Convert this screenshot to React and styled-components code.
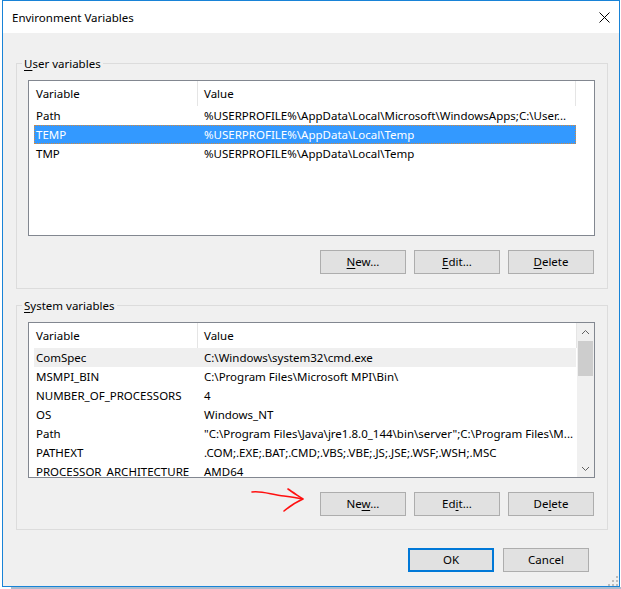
import React from "react";
import styled, { createGlobalStyle } from "styled-components";

const FONT = `"Noto Sans", "Open Sans", sans-serif`;

const GlobalStyle = createGlobalStyle`
  html, body { margin: 0; padding: 0; background: #ffffff; }
  body {
    font-family: ${FONT};
    font-size: 11.5px;
    color: #000;
  }
  * { box-sizing: border-box; }
`;

const Screen = styled.div`
  width: 621px;
  height: 589px;
  padding-left: 2px;
  overflow: hidden;
`;

const Window = styled.div`
  width: 618px;
  height: 587px;
  border: 1px solid #1883d7;
  background: #f0f0f0;
  display: flex;
  flex-direction: column;
`;

const Shadow = styled.div`
  margin-left: 9px;
  height: 2px;
  background: #aabdd0;
`;

const TitleBar = styled.div`
  height: 32px;
  flex: none;
  background: #ffffff;
  display: flex;
  align-items: center;
  padding: 0 9px;
`;

const Title = styled.span`
  flex: 1;
  font-size: 11.5px;
  color: #000;
`;

const Body = styled.div`
  flex: 1;
  display: flex;
  flex-direction: column;
  padding: 22px 11px 0 13px;
`;

const Group = styled.fieldset`
  margin: ${(p) => (p.$first ? "0" : "8px 0 0 0")};
  padding: 9px 12px ${(p) => (p.$first ? 14 : 13)}px 5px;
  border: 1px solid #dcdcdc;
  min-width: 0;
`;

const Legend = styled.legend`
  padding: 0 2px;
  line-height: 16px;
  font-size: 11.5px;
  position: relative;
  top: 1px;
`;

const Key = styled.span`
  text-decoration: underline;
  text-underline-offset: 2px;
`;

const List = styled.div`
  margin-left: 6px;
  height: 156px;
  border: 1px solid #828790;
  background: #ffffff;
  overflow: hidden;
  display: flex;
`;

const ListContent = styled.div`
  flex: 1;
  min-width: 0;
  overflow: hidden;
`;

const Header = styled.div`
  height: 25px;
  display: flex;
`;

const HeaderCell = styled.div`
  flex: ${(p) => (p.$width ? "none" : "1")};
  width: ${(p) => (p.$width ? `${p.$width}px` : "auto")};
  height: 100%;
  display: flex;
  align-items: center;
  padding-left: ${(p) => p.$pad}px;
  border-right: 1px solid #e5e5e5;
  white-space: nowrap;
`;

const Row = styled.div`
  margin-left: 5px;
  width: 542px;
  height: 19px;
  display: flex;
  align-items: center;
  white-space: nowrap;
  background: ${(p) =>
    p.$state === "selected" ? "#3399ff" : p.$state === "hover" ? "#efefef" : "transparent"};
  color: ${(p) => (p.$state === "selected" ? "#ffffff" : "#000000")};
  outline: ${(p) => (p.$state === "selected" ? "1px dotted #d7893a" : "none")};
  outline-offset: -1px;
`;

const NameCell = styled.div`
  width: 168px;
  flex: none;
  padding-left: 2px;
  overflow: hidden;
`;

const ValueCell = styled.div`
  flex: 1;
  min-width: 0;
  padding-left: 2px;
  overflow: hidden;
`;

const Scrollbar = styled.div`
  width: 17px;
  flex: none;
  background: #f0f0f0;
  display: flex;
  flex-direction: column;
`;

const ScrollButton = styled.div`
  height: 17px;
  flex: none;
  display: flex;
  align-items: center;
  justify-content: center;
`;

const Thumb = styled.div`
  margin: 1px 1px 0 1px;
  height: 35px;
  flex: none;
  background: #cdcdcd;
`;

const ScrollTrack = styled.div`
  flex: 1;
`;

const ButtonRow = styled.div`
  margin-top: 14px;
  padding-right: 1px;
  display: flex;
  justify-content: flex-end;
  align-items: flex-start;
  gap: 8px;
`;

const Button = styled.button`
  width: 86px;
  height: 24px;
  margin: 0;
  padding: 0;
  border: ${(p) => (p.$default ? "2px solid #0078d7" : "1px solid #adadad")};
  background: #e1e1e1;
  font-family: ${FONT};
  font-size: 11.5px;
  color: #000;
  line-height: 1;
`;

const Arrow = styled.svg`
  flex: none;
  align-self: flex-start;
  margin-top: -5px;
  margin-right: 6px;
`;

const Footer = styled.div`
  margin-top: 18px;
  height: 38px;
  flex: none;
  display: flex;
  justify-content: flex-end;
  align-items: flex-start;
  margin-right: -11px;
  padding-right: 1px;
`;

const FooterButton = styled(Button)`
  margin-right: ${(p) => p.$mr}px;
`;

const Grip = styled.svg`
  align-self: flex-end;
  flex: none;
`;

const Chevron = ({ down }) => (
  <svg width="9" height="6" viewBox="0 0 9 6">
    <path
      d={down ? "M1 1 L4.5 4.5 L8 1" : "M1 5 L4.5 1.5 L8 5"}
      fill="none"
      stroke="#606060"
      strokeWidth="1"
    />
  </svg>
);

const userVars = [
  ["Path", "%USERPROFILE%\\AppData\\Local\\Microsoft\\WindowsApps;C:\\User...", ""],
  ["TEMP", "%USERPROFILE%\\AppData\\Local\\Temp", "selected"],
  ["TMP", "%USERPROFILE%\\AppData\\Local\\Temp", ""],
];

const systemVars = [
  ["ComSpec", "C:\\Windows\\system32\\cmd.exe", "hover"],
  ["MSMPI_BIN", "C:\\Program Files\\Microsoft MPI\\Bin\\", ""],
  ["NUMBER_OF_PROCESSORS", "4", ""],
  ["OS", "Windows_NT", ""],
  ["Path", "\"C:\\Program Files\\Java\\jre1.8.0_144\\bin\\server\";C:\\Program Files\\M...", ""],
  ["PATHEXT", ".COM;.EXE;.BAT;.CMD;.VBS;.VBE;.JS;.JSE;.WSF;.WSH;.MSC", ""],
  ["PROCESSOR_ARCHITECTURE", "AMD64", ""],
];

const Rows = ({ items }) =>
  items.map(([name, value, state]) => (
    <Row key={name + value} $state={state}>
      <NameCell>{name}</NameCell>
      <ValueCell>{value}</ValueCell>
    </Row>
  ));

export default function App() {
  return (
    <>
      <GlobalStyle />
      <Screen>
        <Window>
          <TitleBar>
            <Title>Environment Variables</Title>
            <svg width="11" height="11" viewBox="0 0 11 11">
              <path d="M0.5 0.5 L10.5 10.5 M10.5 0.5 L0.5 10.5" stroke="#000" strokeWidth="1" />
            </svg>
          </TitleBar>
          <Body>
            <Group $first>
              <Legend>
                <Key>U</Key>ser variables
              </Legend>
              <List>
                <ListContent>
                  <Header>
                    <HeaderCell $width={169} $pad={7}>Variable</HeaderCell>
                    <HeaderCell $width={378} $pad={6}>Value</HeaderCell>
                  </Header>
                  <Rows items={userVars} />
                </ListContent>
              </List>
              <ButtonRow>
                <Button><Key>N</Key>ew...</Button>
                <Button><Key>E</Key>dit...</Button>
                <Button><Key>D</Key>elete</Button>
              </ButtonRow>
            </Group>
            <Group>
              <Legend>
                <Key>S</Key>ystem variables
              </Legend>
              <List>
                <ListContent>
                  <Header>
                    <HeaderCell $width={169} $pad={7}>Variable</HeaderCell>
                    <HeaderCell $pad={6}>Value</HeaderCell>
                  </Header>
                  <Rows items={systemVars} />
                </ListContent>
                <Scrollbar>
                  <ScrollButton><Chevron /></ScrollButton>
                  <Thumb />
                  <ScrollTrack />
                  <ScrollButton><Chevron down /></ScrollButton>
                </Scrollbar>
              </List>
              <ButtonRow>
                <Arrow width="56" height="26" viewBox="0 0 56 26">
                  <path
                    d="M2 5 C 12 3.5, 22 8, 34 9 C 42 10, 48 11, 52 12"
                    fill="none"
                    stroke="#ff1010"
                    strokeWidth="1.6"
                    strokeLinecap="round"
                  />
                  <path
                    d="M38 2 C 42 5, 47 8, 53 12 C 46 15, 40 19, 34 24"
                    fill="none"
                    stroke="#ff1010"
                    strokeWidth="1.6"
                    strokeLinecap="round"
                    strokeLinejoin="round"
                  />
                </Arrow>
                <Button>Ne<Key>w</Key>...</Button>
                <Button>Ed<Key>i</Key>t...</Button>
                <Button>De<Key>l</Key>ete</Button>
              </ButtonRow>
            </Group>
            <Footer>
              <FooterButton $default $mr={9}>OK</FooterButton>
              <FooterButton $mr={19}>Cancel</FooterButton>
              <Grip width="10" height="10" viewBox="0 0 10 10">
                <rect x="8" y="0" width="2" height="2" fill="#bdbdbd" />
                <rect x="4" y="4" width="2" height="2" fill="#bdbdbd" />
                <rect x="8" y="4" width="2" height="2" fill="#bdbdbd" />
                <rect x="0" y="8" width="2" height="2" fill="#bdbdbd" />
                <rect x="4" y="8" width="2" height="2" fill="#bdbdbd" />
                <rect x="8" y="8" width="2" height="2" fill="#bdbdbd" />
              </Grip>
            </Footer>
          </Body>
        </Window>
        <Shadow />
      </Screen>
    </>
  );
}
